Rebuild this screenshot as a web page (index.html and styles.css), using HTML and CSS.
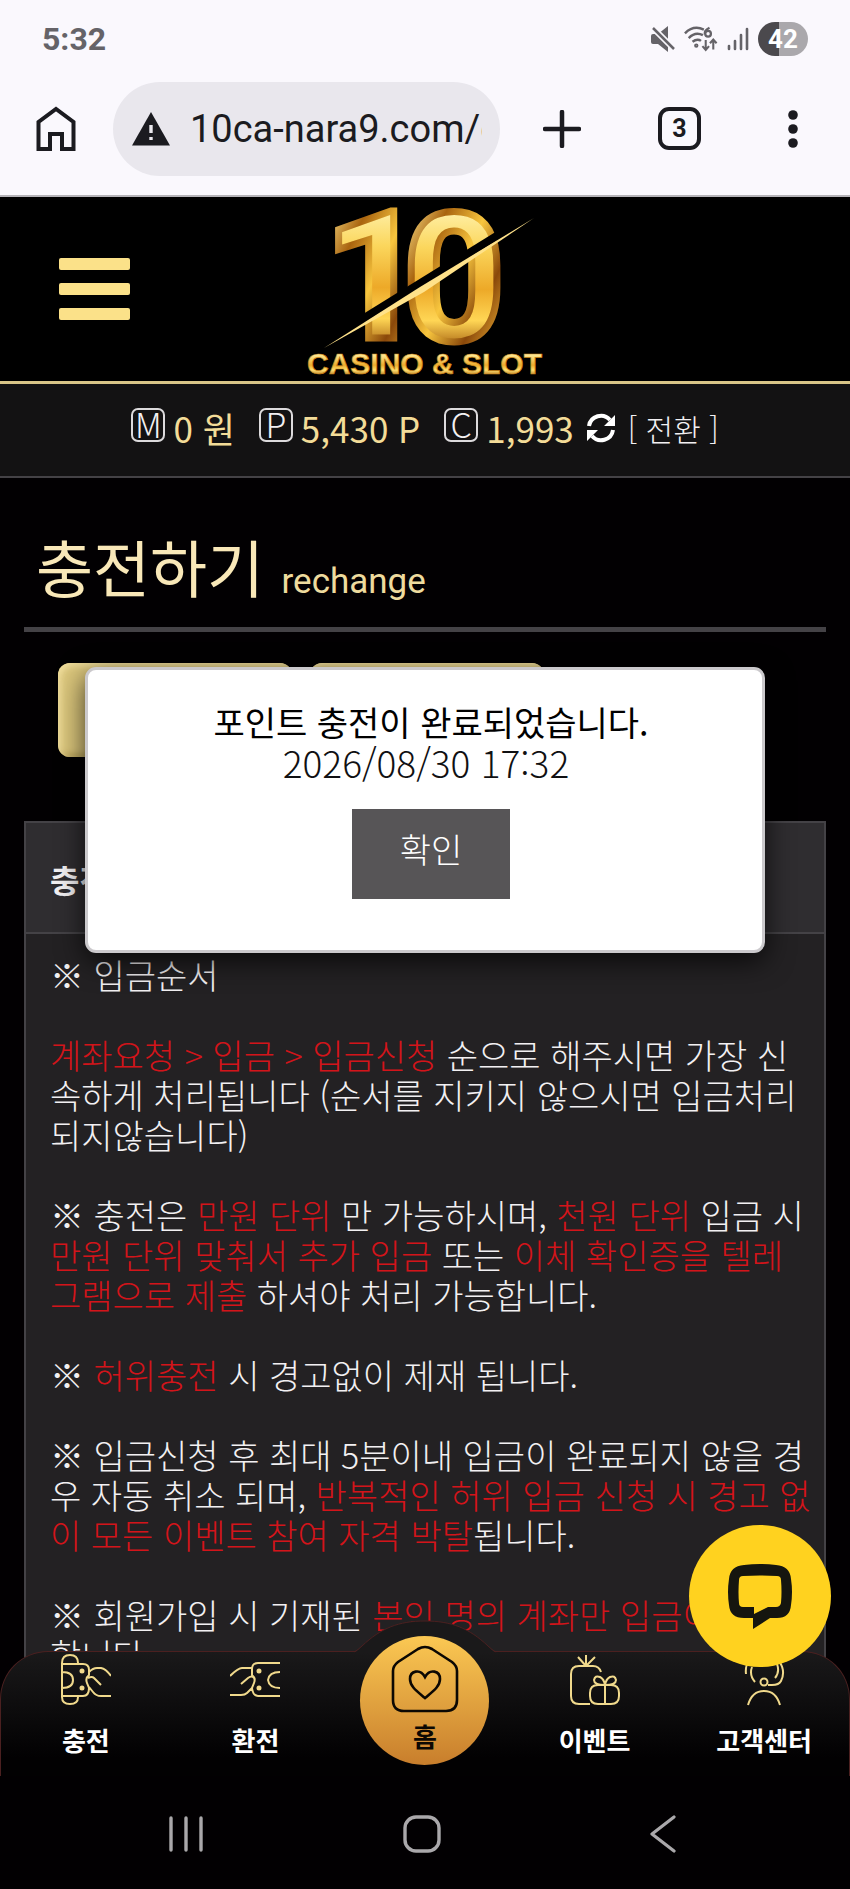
FILE: index.html
```html
<!DOCTYPE html>
<html lang="ko">
<head>
<meta charset="utf-8">
<meta name="viewport" content="width=device-width, initial-scale=1">
<title>충전하기</title>
<link rel="stylesheet" href="styles.css">
</head>
<body>
<div class="status">
  <span class="clock">5:32</span>
  <div class="status-icons">
    <svg width="24" height="26" viewBox="0 0 24 26"><path d="M2 8h5l10-8v26l-10-8h-5a2 2 0 0 1-2-2v-6a2 2 0 0 1 2-2z" fill="#656368"/><path d="M1 1l22 22" stroke="#faf8fd" stroke-width="6"/><path d="M2 2l21 21" stroke="#656368" stroke-width="2.5"/></svg>
    <svg width="34" height="28" viewBox="0 0 36 28" fill="none" stroke="#656368" stroke-width="2.6"><path d="M1 8q9-9 20-4M5 13q7-7 15-3M9 17q5-4 9-1"/><circle cx="13" cy="21" r="1" /><path d="M27 2q-6 3-5 7" stroke-width="2.4"/><circle cx="25.500" cy="8.500" r="3" stroke-width="2.4"/><path d="M23 15v10M19.500 21.500l3.500 4 3.500-4M31 25v-10M27.500 18.500l3.500-4 3.500 4" stroke-width="2.2"/></svg>
    <svg width="22" height="24" viewBox="0 0 22 24" stroke="#656368" stroke-width="2.6" stroke-linecap="round"><path d="M2 19v3M8 14v8M14 8v14M20 2v20"/></svg>
    <span class="battery">42</span>
  </div>
</div>
<div class="toolbar">
  <button class="tool" aria-label="홈 페이지"><svg width="40" height="46" viewBox="0 0 40 46" fill="none" stroke="#1b1b20" stroke-width="4"><path d="M2.500 43V16L20 3l17.500 13v27H26V28H14v15z"/></svg></button>
  <div class="address">
    <svg width="38" height="34" viewBox="0 0 38 34"><path d="M19 0l19 33.500H0z" fill="#1b1b20"/><path d="M19 13v8M19 25v3" stroke="#e9e7ed" stroke-width="3.4"/></svg>
    <input class="url" type="text" aria-label="주소" value="10ca-nara9.com/c">
  </div>
  <button class="tool plus" aria-label="새 탭"><svg width="38" height="38" viewBox="0 0 38 38" stroke="#1b1b20" stroke-width="4.5" stroke-linecap="round"><path d="M19 2v34M2 19h34"/></svg></button>
  <button class="tool tabs" aria-label="탭">3</button>
  <button class="tool more" aria-label="메뉴"><svg width="10" height="38" viewBox="0 0 10 38" fill="#1b1b20"><circle cx="5" cy="5" r="4.800"/><circle cx="5" cy="19" r="4.800"/><circle cx="5" cy="33" r="4.800"/></svg></button>
</div>

<header class="site-head">
  <button class="burger" aria-label="전체 메뉴"><i></i><i></i><i></i></button>
  <a class="logo" href="#" aria-label="10 Casino &amp; Slot">
    <svg width="240" height="180" viewBox="305 200 240 180">
      <defs>
        <linearGradient id="gold" x1="0" y1="0" x2="0" y2="1"><stop offset=".15" stop-color="#fff3b0"/><stop offset=".35" stop-color="#fbd65c"/><stop offset=".55" stop-color="#eda928"/><stop offset=".7" stop-color="#ffd655"/><stop offset=".85" stop-color="#9a5208"/></linearGradient>
        <linearGradient id="edge" x1="0" y1="0" x2="1" y2="1"><stop offset=".1" stop-color="#fbe389"/><stop offset=".3" stop-color="#a9640f"/><stop offset=".5" stop-color="#f8c63e"/><stop offset=".7" stop-color="#8a480a"/><stop offset=".9" stop-color="#f0b436"/></linearGradient>
        <linearGradient id="word" x1="0" y1="0" x2="0" y2="1"><stop offset=".2" stop-color="#fff0a0"/><stop offset=".55" stop-color="#edac2e"/><stop offset=".7" stop-color="#ffe070"/><stop offset=".9" stop-color="#a65c0c"/></linearGradient>
      </defs>
      <g class="digits" fill="url(#gold)" stroke="url(#edge)">
        <text x="324" y="339">1</text>
        <text x="403" y="341">0</text>
      </g>
      <path d="M345 331L524 220" stroke="#000" stroke-width="8"/>
      <path d="M324 349L420 288 534 219 424 293z" fill="#ffe28a"/>
      <text class="word" x="307" y="375" fill="url(#word)" stroke="#c98418" stroke-width=".7">CASINO &amp; SLOT</text>
    </svg>
  </a>
</header>

<div class="wallet">
  <span class="coin">M</span><span class="amount">0 원</span>
  <span class="coin">P</span><span class="amount">5,430 P</span>
  <span class="coin">C</span><span class="amount last">1,993</span>
  <button class="swap"><svg width="30" height="30" viewBox="0 0 30 30" fill="none" stroke="#fff" stroke-width="4"><path d="M3 13A12 12 0 0 1 24 7M27 17A12 12 0 0 1 6 23"/><path d="M29 2v11H18zM1 28V17h11z" fill="#fff" stroke="none"/></svg>[ 전환 ]</button>
</div>

<main class="page">
  <h1 class="title">충전하기 <small>rechange</small></h1>
  <div class="choices">
    <button class="choice" aria-label="입금"></button>
    <button class="choice" aria-label="포인트"></button>
  </div>
  <section class="panel">
    <h2>충전</h2>
    <div class="notice">
      <p>※ 입금순서</p>
      <p><em>계좌요청 &gt; 입금 &gt; 입금신청</em> 순으로 해주시면 가장 신<br>속하게 처리됩니다 (순서를 지키지 않으시면 입금처리<br>되지않습니다)</p>
      <p>※ 충전은 <em>만원 단위</em> 만 가능하시며, <em>천원 단위</em> 입금 시<br><em>만원 단위 맞춰서 추가 입금</em> 또는 <em>이체 확인증을 텔레<br>그램으로 제출</em> 하셔야 처리 가능합니다.</p>
      <p>※ <em>허위충전</em> 시 경고없이 제재 됩니다.</p>
      <p>※ 입금신청 후 최대 5분이내 입금이 완료되지 않을 경<br>우 자동 취소 되며, <em>반복적인 허위 입금 신청 시 경고 없<br>이 모든 이벤트 참여 자격 박탈</em>됩니다.</p>
      <p>※ 회원가입 시 기재된 <em>본인 명의 계좌만 입금이</em><br>합니다.</p>
    </div>
  </section>
</main>

<div class="dialog" role="dialog" aria-labelledby="msg">
  <strong id="msg">포인트 충전이 완료되었습니다.</strong>
  <time>2026/08/30 17:32</time>
  <button class="ok">확인</button>
</div>

<div class="dock">
  <nav class="tabbar">
    <svg class="bump" width="142" height="33" viewBox="0 0 142 33"><path d="M0 33Q4 31 8 26C27 8 45 1 71 1s44 7 63 25q4 5 8 7z" fill="#1a191a"/><path d="M0 32Q4 30 8 26C27 8 45 1 71 1s44 7 63 25q4 4 8 6" fill="none" stroke="#4b2020"/></svg>
    <a href="#"><svg width="50" height="52" viewBox="0 0 50 52" fill="none" stroke="#f0d98c" stroke-width="2"><path d="M1 9Q1 1 9 1t8 8v1h5q6 0 6 6v5q-4 3-2 8l2 5q0 8-6 8h-5v1q0 7-8 7t-8-7zM1 10h16M1 42h16M1 18q11 0 11 8t-11 8M28 18q4-4 8-4h4q5 1 10 8M27 24q4-2 6 0l7 7M28 33l4 5q3 4 8 4h10"/><circle cx="21" cy="17" r="1.500" fill="#f0d98c"/><circle cx="21" cy="34" r="1.500" fill="#f0d98c"/></svg>충전</a>
    <a href="#"><svg width="50" height="52" viewBox="0 0 50 52" fill="none" stroke="#f0d98c" stroke-width="2"><path d="M50 9H28q-6 0-6 6v6q4 3 2 8l-2 5q1 8 6 8h22M50 18q-11 0-12 8 1 8 12 8M22 14H12Q8 14 0 22M11 30l7-6q4-3 6 0M22 34l-5 5q-2 2-6 2H0"/><circle cx="29" cy="17" r="1.500" fill="#f0d98c"/><circle cx="29" cy="34" r="1.500" fill="#f0d98c"/></svg>환전</a>
    <a class="home" href="#"><svg width="68" height="68" viewBox="0 0 68 68" fill="none" stroke="#0c0803" stroke-width="2.600"><path d="M27 4q7-4 14 0l20 13q5 4 5 9v29q0 11-11 11H13Q2 66 2 55V26q0-5 5-9z"/><path d="M34 53C27 47 19 42 19 34c0-8 10-11 15-2 5-9 15-6 15 2 0 8-8 13-15 19z"/></svg>홈</a>
    <a href="#"><svg width="50" height="52" viewBox="0 0 50 52" fill="none" stroke="#f0d98c" stroke-width="2"><path d="M20 50H9q-8 0-8-8V20q0-8 8-8h14q6 0 8 6M16 12V1M16 12L8 3M16 12l9-9M28 31h13q8 0 8 8v3q0 8-8 8H28q-8 0-8-8v-3q0-8 8-8zM35 31v19M35 31q-11 0-11-5 1-5 6-3 4 2 5 8 1-6 5-8 5-2 6 3 0 5-11 5"/></svg>이벤트</a>
    <a href="#"><svg width="50" height="52" viewBox="0 0 50 52" fill="none" stroke="#f0d98c" stroke-width="2"><path d="M7 20q-1-8 3-13Q25-5 40 7q7 10 2 20-2 4-9 4h-4M16 28q-6-7-3-15M36 24q5-6 2-14M9 51q4-14 16-14t16 14"/><circle cx="25" cy="28" r="3.500"/></svg>고객센터</a>
  </nav>
  <div class="system">
    <button aria-label="최근 앱"><svg width="36" height="38" viewBox="0 0 36 38" stroke="#aaa8ab" stroke-width="3.400" stroke-linecap="round"><path d="M3 3v32M18 3v32M33 3v32"/></svg></button>
    <button aria-label="홈"><svg width="38" height="38" viewBox="0 0 38 38" fill="none" stroke="#aaa8ab" stroke-width="3.400"><rect x="2" y="2" width="34" height="34" rx="11"/></svg></button>
    <button aria-label="뒤로"><svg width="26" height="38" viewBox="0 0 26 38" fill="none" stroke="#aaa8ab" stroke-width="3.200" stroke-linecap="round" stroke-linejoin="round"><path d="M24 2L2 19l22 17"/></svg></button>
  </div>
  <button class="chat" aria-label="채팅 상담"><svg width="68" height="68" viewBox="0 0 68 68"><path fill-rule="evenodd" d="M18 3Q34 1 50 3 64 4 65 17q2 13 0 26-1 13-14 13h-7L27 67V56h-9Q4 56 3 43q-2-13 0-26Q4 4 18 3zM17 14q-4 0-4 4-1 13 0 23 0 4 4 4h11v7l14-7h8q4 0 5-4 1-11 0-23 0-4-4-4-17-1-34 0z" fill="#15150f"/></svg></button>
</div>
</body>
</html>
```
FILE: styles.css
```css
* { box-sizing: border-box; }
body {
  position: relative;
  height: 100vh;
  margin: 0;
  overflow: hidden;
  background: #020002;
  color: #f2f0f2;
  font: 300 34px/40px "Noto Sans CJK KR", sans-serif;
}
button { padding: 0; border: 0; background: none; color: inherit; font: inherit; }
a { color: inherit; text-decoration: none; }
svg { display: block; flex: none; }

.status {
  display: flex;
  justify-content: space-between;
  align-items: center;
  height: 78px;
  padding: 0 42px;
  background: #faf8fd;
  color: #656368;
}
.clock { font: 700 32px/40px Roboto, sans-serif; }
.status-icons { display: flex; align-items: center; gap: 9px; }
.battery {
  width: 50px;
  height: 34px;
  border-radius: 17px;
  background: linear-gradient(90deg, #4b494d 42%, #aaa8ac 42%);
  color: #fff;
  font: 700 26px/34px Roboto, sans-serif;
  text-align: center;
}

.toolbar {
  display: flex;
  align-items: center;
  height: 119px;
  padding: 0 52px 16px 36px;
  border-bottom: 2px solid #b5b3b8;
  background: #faf8fd;
  color: #1b1b20;
}
.tool { flex: none; }
.address {
  display: flex;
  flex: 1;
  align-items: center;
  gap: 20px;
  min-width: 0;
  height: 94px;
  margin: 0 43px 0 37px;
  padding: 0 18px 0 19px;
  border-radius: 47px;
  background: #e9e7ed;
}
.url {
  flex: 1;
  min-width: 0;
  padding: 0;
  border: 0;
  background: none;
  color: #1b1b20;
  font: 400 38px/48px Roboto, sans-serif;
}
.tabs {
  width: 43px;
  height: 43px;
  margin: 0 87px 0 77px;
  border: 4px solid #1b1b20;
  border-radius: 11px;
  font: 700 25px/35px Roboto, sans-serif;
}

.site-head {
  display: grid;
  grid-template-columns: 1fr auto 1fr;
  align-items: center;
  height: 187px;
  padding: 0 59px;
  border-bottom: 3px solid #d9c588;
  background: #000;
}
.burger { display: grid; gap: 13px; width: 71px; }
.burger i { height: 12px; border-radius: 2px; background: #fbe189; }
.digits { font: 700 178px Roboto, sans-serif; stroke-width: 7px; }
.word { font: 700 30px "Liberation Sans", sans-serif; }

.wallet {
  display: flex;
  justify-content: center;
  align-items: center;
  height: 94px;
  padding-bottom: 4px;
  border-bottom: 2px solid #444246;
  background: #131213;
}
.coin {
  width: 34px;
  height: 34px;
  margin-right: 8px;
  margin-bottom: 6px;
  border: 2px solid #dcdadc;
  border-radius: 7px;
  font-size: 34px;
  line-height: 28px;
  text-align: center;
}
.amount { margin-right: 24px; color: #f3dc98; font-size: 35px; font-weight: 400; white-space: nowrap; }
.last { margin-right: 12px; }
.swap { display: flex; align-items: center; gap: 12px; font-size: 30px; }

.page { padding: 48px 24px 0; }
.title {
  height: 106px;
  margin: 0;
  padding-left: 12px;
  border-bottom: 5px solid #444246;
  color: #f9e8b8;
  font-size: 62px;
  font-weight: 400;
  line-height: 80px;
}
.title small { font: 400 35px/40px Roboto, sans-serif; color: #eedb9e; }
.choices { display: flex; gap: 18px; padding: 31px 34px 64px; }
.choice {
  width: 234px;
  height: 94px;
  border-radius: 12px;
  background: #dcc77c;
  box-shadow: inset 3px 3px 6px #f1df9f, inset -3px -3px 6px #b59f55;
}
.panel { border: 2px solid #444246; background: #232123; }
.panel h2 {
  margin: 0;
  padding: 36px 24px 33px;
  border-bottom: 2px solid #444246;
  background: #2f2d30;
  font-size: 32px;
  font-weight: 700;
  line-height: 40px;
}
.notice { padding: 21px 0 0 24px; }
.notice p { margin: 0 0 40px; white-space: nowrap; }
.notice em { color: #d3141a; font-style: normal; }

.dialog {
  position: absolute;
  top: 667px;
  left: 10%;
  right: 10%;
  display: flex;
  flex-direction: column;
  align-items: center;
  padding: 32px 0 51px 12px;
  border: 3px solid #cbc9cc;
  border-radius: 11px;
  background: #fff;
  box-shadow: 0 8px 28px #000b;
  color: #101012;
}
.dialog strong { color: #000; font-weight: 400; }
.dialog time { margin-right: 10px; font-size: 37px; }
.ok {
  margin-top: 27px;
  padding: 20px 48px 30px;
  background: #575557;
  color: #fff;
  font-weight: 300;
}

.dock { position: absolute; left: 0; right: 0; bottom: 0; }
.tabbar {
  position: relative;
  display: grid;
  grid-template-columns: repeat(5, 1fr);
  height: 125px;
  border: 1px solid #4b2020;
  border-bottom: 0;
  border-radius: 48px 48px 0 0;
  background: linear-gradient(#1a191a, #020102 85%);
}
.bump { position: absolute; left: 50%; top: -32px; margin-left: -71px; }
.tabbar a {
  display: flex;
  flex-direction: column;
  align-items: center;
  gap: 14px;
  padding-top: 2px;
  color: #fff;
  font-size: 26px;
  font-weight: 700;
  line-height: 40px;
}
.tabbar .home {
  position: relative;
  justify-self: center;
  width: 129px;
  height: 129px;
  margin-top: -16px;
  padding-top: 9px;
  gap: 3px;
  border-radius: 50%;
  background: linear-gradient(#fbc853, #c87e2c);
  color: #0c0803;
}
.system {
  display: grid;
  grid-template-columns: 1fr auto 1fr;
  align-items: center;
  height: 113px;
  padding: 2px 174px 0 168px;
  background: #020002;
}
.system button:last-child { justify-self: end; }
.chat {
  position: absolute;
  right: 19px;
  bottom: 222px;
  display: grid;
  place-items: center;
  width: 142px;
  height: 142px;
  border-radius: 50%;
  background: #ffd21f;
}
```
